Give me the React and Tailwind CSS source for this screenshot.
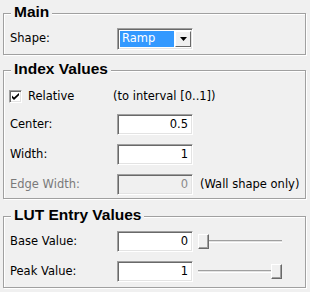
import React from "react";

const font = { fontFamily: '"DejaVu Sans", Verdana, sans-serif' };

const Group = ({ title, className, children }) => (
  <div
    className={`relative border border-[#a0a0a0] shadow-[inset_1px_1px_0_#fff,1px_1px_0_#fff] ${className}`}
  >
    <span
      className="absolute top-[-11px] left-[7px] bg-[#f0f0f0] px-[3px] text-[15.5px] leading-[18px] font-bold text-black"
      style={{ fontFamily: '"Liberation Sans", Arial, sans-serif' }}
    >
      {title}
    </span>
    {children}
  </div>
);

const Field = ({ value, disabled }) => (
  <div
    className={`w-[76px] h-[21px] flex items-center justify-end pr-[4px] border border-t-[#a0a0a0] border-l-[#a0a0a0] border-r-white border-b-white shadow-[inset_1px_1px_0_#696969,inset_-1px_-1px_0_#e3e3e3] ${
      disabled ? "bg-[#f0f0f0] text-[#8a8a8a]" : "bg-white text-black"
    }`}
  >
    {value}
  </div>
);

const Slider = ({ at }) => (
  <div className="relative ml-[5px] w-[84px] h-[21px]">
    <div className="absolute left-0 right-0 top-[9px] h-[3px] border-t border-t-[#a0a0a0] border-b border-b-white bg-[#e3e3e3]" />
    <div
      className={`absolute top-[3px] w-[11px] h-[15px] bg-[#f0f0f0] border border-t-white border-l-white border-r-[#696969] border-b-[#696969] shadow-[inset_-1px_-1px_0_#a0a0a0] ${
        at === "start" ? "left-0" : "right-0"
      }`}
    />
  </div>
);

const Row = ({ label, muted, children }) => (
  <div className="flex items-center h-[21px]">
    <span className={`w-[107px] ${muted ? "text-[#7a7a7a]" : "text-black"}`}>{label}</span>
    {children}
  </div>
);

export default function App() {
  return (
    <div
      className="w-[310px] h-[292px] bg-[#f0f0f0] pt-[13px] px-[3px] text-[11.5px] leading-none overflow-hidden"
      style={font}
    >
      <Group title="Main" className="w-[303px] h-[42px] pt-[14px] pl-[6px]">
        <div className="flex items-center h-[22px]">
          <span className="w-[107px] text-black">Shape:</span>
          <div className="w-[76px] h-[22px] flex border border-t-[#a0a0a0] border-l-[#a0a0a0] border-r-white border-b-white shadow-[inset_1px_1px_0_#696969,inset_-1px_-1px_0_#e3e3e3] bg-white p-[2px] pr-[1px]">
            <div className="flex-1 bg-[#3399ff] text-white flex items-center pl-[2px]">Ramp</div>
            <div className="w-[16px] ml-[1px] bg-[#f0f0f0] border border-t-white border-l-white border-r-[#696969] border-b-[#696969] flex items-center justify-center">
              <svg width="7" height="4" viewBox="0 0 7 4">
                <path d="M0 0h7L3.5 4z" fill="#000" />
              </svg>
            </div>
          </div>
        </div>
      </Group>

      <Group title="Index Values" className="mt-[15px] w-[303px] h-[129px] pt-[15px] pl-[6px]">
        <div className="flex items-center h-[21px]">
          <div className="w-[13px] h-[13px] ml-[-1px] bg-white border border-t-[#a0a0a0] border-l-[#a0a0a0] border-r-white border-b-white shadow-[inset_1px_1px_0_#696969,inset_-1px_-1px_0_#e3e3e3] flex items-center justify-center">
            <svg width="7" height="7" viewBox="0 0 7 7">
              <path d="M0 2.5l2 2 5-4.5v2.2L2 7 0 5z" fill="#000" />
            </svg>
          </div>
          <span className="ml-[6px] w-[85px] text-black">Relative</span>
          <span className="text-black">(to interval [0..1])</span>
        </div>
        <div className="mt-[7px] flex flex-col gap-[9px]">
          <Row label="Center:">
            <Field value="0.5" />
          </Row>
          <Row label="Width:">
            <Field value="1" />
          </Row>
          <Row label="Edge Width:" muted>
            <Field value="0" disabled />
            <span className="ml-[7px] text-black">(Wall shape only)</span>
          </Row>
        </div>
      </Group>

      <Group title="LUT Entry Values" className="mt-[17px] w-[303px] h-[72px] pt-[14px] pl-[6px]">
        <div className="flex flex-col gap-[9px]">
          <Row label="Base Value:">
            <Field value="0" />
            <Slider at="start" />
          </Row>
          <Row label="Peak Value:">
            <Field value="1" />
            <Slider at="end" />
          </Row>
        </div>
      </Group>
    </div>
  );
}
